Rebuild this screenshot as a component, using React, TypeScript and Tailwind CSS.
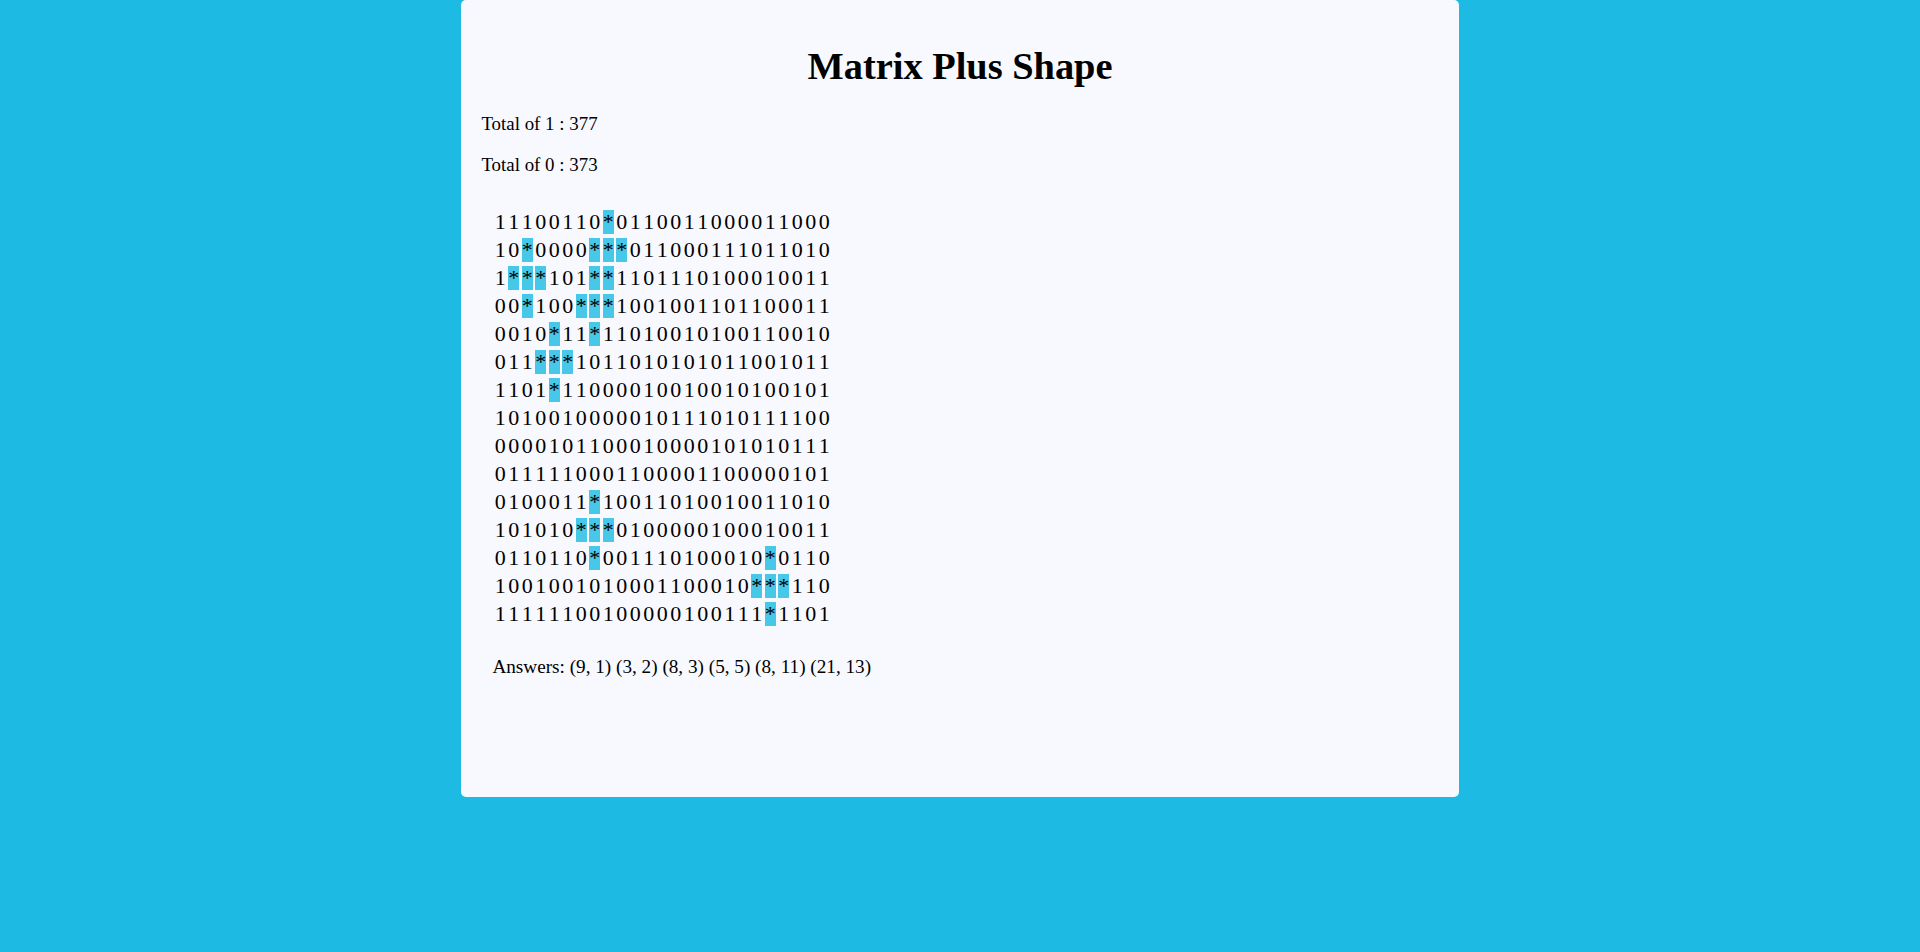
import React from "react";

const rows = [
  "11100110*0110011000011000",
  "10*0000***011000111011010",
  "1***101**1101110100010011",
  "00*100***1001001101100011",
  "0010*11*11010010100110010",
  "011***1011010101011001011",
  "1101*11000010010010100101",
  "1010010000010111010111100",
  "0000101100010000101010111",
  "0111110001100001100000101",
  "0100011*10011010010011010",
  "101010***0100000100010011",
  "0110110*001110100010*0110",
  "1001001010001100010***110",
  "11111100100000100111*1101",
];

export default function App() {
  return (
    <div
      className="min-h-[952px] w-full bg-[#1dbbe3]"
      style={{ fontFamily: '"Liberation Serif", "Times New Roman", serif' }}
    >
      <div className="mx-auto flex h-[797px] w-[52%] flex-col rounded-[5px] bg-[#f8f9fe] pl-[20.6px] pt-[44px] text-black">
        <h1 className="text-center text-[38.4px] font-bold leading-[44px] pr-[20.6px]">
          Matrix Plus Shape
        </h1>
        <p className="mt-[24.8px] text-[18.9px] leading-[22px]">Total of 1 : 377</p>
        <p className="mt-[18.9px] text-[18.9px] leading-[22px]">Total of 0 : 373</p>
        <div className="ml-[13.3px] mt-[32.5px] flex flex-col">
          {rows.map((r, i) => (
            <div key={i} className="flex h-[28px] items-center gap-[2.5px]">
              {r.split("").map((c, j) => (
                <span
                  key={j}
                  className={
                    "block h-[24.4px] w-[11px] text-center text-[22px] leading-[24.4px] " +
                    (c === "*" ? "bg-[#48c8e9]" : "")
                  }
                >
                  {c}
                </span>
              ))}
            </div>
          ))}
        </div>
        <p className="ml-[11px] mt-[27.6px] text-[19.2px] leading-[22px]">
          Answers: (9, 1) (3, 2) (8, 3) (5, 5) (8, 11) (21, 13)
        </p>
      </div>
    </div>
  );
}
